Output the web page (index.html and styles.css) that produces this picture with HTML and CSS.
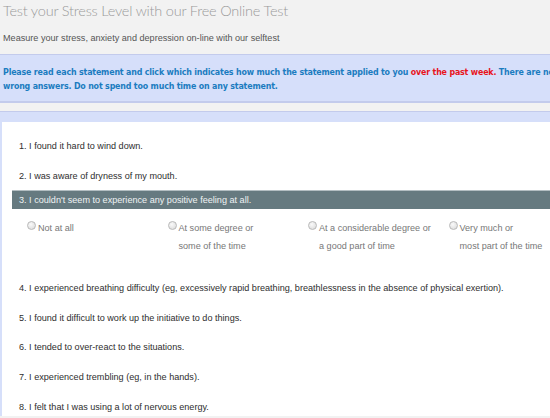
FILE: index.html
```html
<!DOCTYPE html>
<html>
<head>
<meta charset="utf-8">
<link rel="stylesheet" href="styles.css">
</head>
<body>
<header class="head">
  <h1 class="title">Test your Stress Level with our Free Online Test</h1>
  <p class="subtitle">Measure your stress, anxiety and depression on-line with our selftest</p>
</header>
<div class="notice">Please read each statement and click which indicates how much the statement applied to you <span class="red">over the past week.</span> There are no<br>wrong answers. Do not spend too much time on any statement.</div>
<div class="main">
  <div class="panel">
    <div class="q">1. I found it hard to wind down.</div>
    <div class="q">2. I was aware of dryness of my mouth.</div>
    <div class="q active">3. I couldn't seem to experience any positive feeling at all.</div>
    <div class="options">
      <label class="opt"><span class="radio"></span><span class="lbl">Not at all</span></label>
      <label class="opt"><span class="radio"></span><span class="lbl">At some degree or<br>some of the time</span></label>
      <label class="opt"><span class="radio"></span><span class="lbl">At a considerable degree or<br>a good part of time</span></label>
      <label class="opt"><span class="radio"></span><span class="lbl">Very much or<br>most part of the time</span></label>
    </div>
    <div class="q">4. I experienced breathing difficulty (eg, excessively rapid breathing, breathlessness in the absence of physical exertion).</div>
    <div class="q">5. I found it difficult to work up the initiative to do things.</div>
    <div class="q">6. I tended to over-react to the situations.</div>
    <div class="q">7. I experienced trembling (eg, in the hands).</div>
    <div class="q">8. I felt that I was using a lot of nervous energy.</div>
  </div>
</div>
</body>
</html>
```
FILE: styles.css
```css
html, body {
  margin: 0;
  padding: 0;
  background: #f2f2f2;
  overflow: hidden;
  width: 550px;
  height: 418px;
}
.head {
  padding: 1px 3px 0;
}
.title {
  margin: 0;
  font-family: Lato, "Open Sans", sans-serif;
  font-weight: 300;
  font-size: 14.5px;
  letter-spacing: -0.2px;
  line-height: 20px;
  color: #9a9a9a;
  white-space: nowrap;
}
.subtitle {
  margin: 10px 0 9px;
  font-family: "Liberation Sans", Arial, sans-serif;
  font-size: 9.1px;
  line-height: 14px;
  color: #555;
}
.notice {
  background: #d6dffa;
  border-top: 1px solid #c3cbec;
  border-bottom: 2px solid #c3cbec;
  padding: 10px 3px 8px;
  font-family: "DejaVu Sans", sans-serif;
  font-stretch: condensed;
  font-weight: bold;
  font-size: 8.8px;
  letter-spacing: -0.17px;
  line-height: 14px;
  color: #1b7cc0;
  white-space: nowrap;
  overflow: hidden;
}
.red { color: #e8141c; }
.main {
  margin-top: 8px;
  background: #d6dffa;
  border-top: 1px solid #c3cbec;
  padding: 10px 0 0 2px;
}
.panel {
  background: #fff;
  padding-top: 15px;
  font-family: "Liberation Sans", Arial, sans-serif;
  font-size: 9.1px;
  line-height: 18px;
  color: #2e2e2e;
  overflow: hidden;
}
.q {
  padding-left: 17px;
  margin-bottom: 11.7px;
  white-space: nowrap;
}
.q:last-child {
  margin-bottom: 0;
}
.q.active {
  margin: -6.4px 0 0 10px;
  padding-left: 7px;
  background: #667a80;
  border-top: 1px solid #b3bec2;
  color: #eef2f3;
}
.options {
  display: grid;
  grid-template-columns: 140.5px 140.5px 140.5px 140.5px;
  margin: 10px 0 24px 25px;
  color: #777;
}
.opt {
  display: flex;
  align-items: flex-start;
}
.radio {
  flex: none;
  width: 7px;
  height: 7px;
  margin: 2px 2px 0 0;
  border: 1px solid #b9b9b9;
  border-radius: 50%;
  background: radial-gradient(circle at 40% 35%, #fafafa, #d8d8d8);
}
.lbl {
  white-space: nowrap;
}
```
